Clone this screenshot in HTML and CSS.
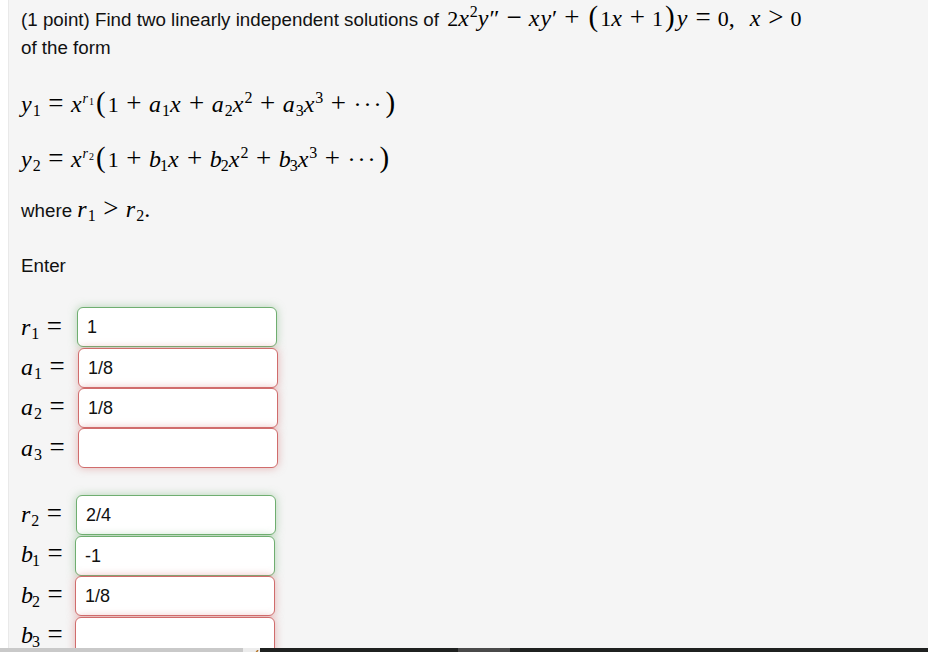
FILE: index.html
```html
<!DOCTYPE html>
<html lang="en">
<head>
  <meta charset="UTF-8">
  <title>Problem</title>
  <link rel="stylesheet" href="styles.css">
</head>
<body>

  <div class="problem">
    <p class="intro">(1 point) Find two linearly independent solutions of <span class="math eq"><span class="n">2</span><i>x</i><sup>2</sup><i>y</i>″<span class="op">−</span><i>x</i><i>y</i>′<span class="op">+</span><span class="paren">(</span><span class="n">1</span><i>x</i><span class="op">+</span><span class="n">1</span><span class="paren">)</span><i>y</i><span class="op">=</span><span class="n">0</span>,<span class="gap"></span><i>x</i><span class="op">&gt;</span><span class="n">0</span></span><br>of the form</p>

    <p class="math formula"><i>y</i><sub>1</sub><span class="op">=</span><i>x</i><sup><i>r</i><sub>1</sub></sup><span class="paren">(</span><span class="n">1</span><span class="op">+</span><i>a</i><sub>1</sub><i>x</i><span class="op">+</span><i>a</i><sub>2</sub><i>x</i><sup>2</sup><span class="op">+</span><i>a</i><sub>3</sub><i>x</i><sup>3</sup><span class="op">+</span><span class="dots">···</span><span class="paren">)</span></p>
    <p class="math formula"><i>y</i><sub>2</sub><span class="op">=</span><i>x</i><sup><i>r</i><sub>2</sub></sup><span class="paren">(</span><span class="n">1</span><span class="op">+</span><i class="b">b</i><sub>1</sub><i>x</i><span class="op">+</span><i class="b">b</i><sub>2</sub><i>x</i><sup>2</sup><span class="op">+</span><i class="b">b</i><sub>3</sub><i>x</i><sup>3</sup><span class="op">+</span><span class="dots">···</span><span class="paren">)</span></p>

    <p class="where">where <span class="math inline"><i>r</i><sub>1</sub><span class="op">&gt;</span><i>r</i><sub>2</sub>.</span></p>

    <p class="enter">Enter</p>

    <div class="answers group-a">
      <div class="row first"><label class="math"><i>r</i><sub>1</sub><span class="op">=</span></label><input class="ok" type="text" value="1"></div>
      <div class="row"><label class="math"><i>a</i><sub>1</sub><span class="op">=</span></label><input class="bad" type="text" value="1/8"></div>
      <div class="row"><label class="math"><i>a</i><sub>2</sub><span class="op">=</span></label><input class="bad" type="text" value="1/8"></div>
      <div class="row"><label class="math"><i>a</i><sub>3</sub><span class="op">=</span></label><input class="bad" type="text" value=""></div>
    </div>

    <div class="answers group-b">
      <div class="row first"><label class="math"><i>r</i><sub>2</sub><span class="op">=</span></label><input class="ok" type="text" value="2/4"></div>
      <div class="row"><label class="math"><i class="b">b</i><sub>1</sub><span class="op">=</span></label><input class="ok" type="text" value="-1"></div>
      <div class="row"><label class="math"><i class="b">b</i><sub>2</sub><span class="op">=</span></label><input class="bad" type="text" value="1/8"></div>
      <div class="row"><label class="math"><i class="b">b</i><sub>3</sub><span class="op">=</span></label><input class="bad" type="text" value=""></div>
    </div>
  </div>

  <div class="taskbar">
    <div class="tray-light"></div>
    <div class="tray-thumb"><svg width="17" height="4" viewBox="0 0 17 4"><path d="M5 4h8V2H5z" fill="#a8c84a"/><path d="M12 4l3-4" stroke="#b5762a" stroke-width="1.5"/></svg></div>
    <div class="tray-dark"></div>
    <div class="tray-mid"></div>
    <div class="tray-dark grow"></div>
  </div>

</body>
</html>
```

FILE: styles.css
```css
* {
  box-sizing: border-box;
  margin: 0;
  padding: 0;
}

html, body {
  height: 652px;
  overflow: hidden;
}

body {
  display: flex;
  flex-direction: column;
  background-color: #fff;
  font-family: "Liberation Sans", Arial, sans-serif;
  font-size: 18.75px;
  color: #111;
  padding-left: 8px;
}

.problem {
  flex: 1;
  min-height: 0;
  overflow: hidden;
  background-color: #f5f5f5;
  border-left: 1px solid #e9e9e9;
  padding: 6px 0 0 12px;
}

.intro {
  line-height: 27.5px;
  white-space: nowrap;
}

.math {
  font-family: "Liberation Serif", "Times New Roman", serif;
  font-size: 24px;
  color: #000;
}

.math i {
  letter-spacing: 1px;
}

.math i.b {
  letter-spacing: -1px;
}

.n {
  font-size: 22px;
}

.math sup, .math sub {
  font-size: 16px;
  line-height: 0;
}

.math sub {
  vertical-align: -4px;
}

.math sup {
  vertical-align: 9px;
}

.math sup i {
  font-size: 14px;
}

.math sup sub {
  font-size: 10px;
  vertical-align: -2px;
}

.op {
  font-size: 27px;
  line-height: 0;
  margin: 0 7.5px;
}

.paren {
  font-size: 29px;
  font-weight: 300;
  line-height: 0;
  margin: 0 2px;
}

.dots {
  letter-spacing: 2px;
}

.eq, .inline {
  line-height: 0;
}

.eq {
  margin-left: 3px;
}

.eq .op {
  margin: 0 7px;
}

.gap {
  display: inline-block;
  width: 15px;
}

.formula {
  margin-top: 26px;
  line-height: 35px;
  white-space: nowrap;
}

.formula + .formula {
  margin-top: 20px;
}

.where {
  margin-top: 20px;
  line-height: 27px;
}

.enter {
  margin-top: 28px;
  line-height: 27px;
}

.answers {
  display: flex;
  flex-direction: column;
}

.group-a {
  margin-top: 28px;
}

.group-b {
  margin-top: 26.6px;
}

.row {
  display: flex;
  align-items: center;
  height: 40.4px;
}

.row label {
  width: 57px;
  white-space: nowrap;
}

.row.first label {
  width: 56px;
}

.group-b .row label {
  width: 54px;
  padding-bottom: 2px;
}

.group-b .row.first label {
  width: 55px;
}

.row input {
  width: 200px;
  height: 40px;
  padding: 1px 9px 0;
  font-family: "Liberation Sans", Arial, sans-serif;
  font-size: 18px;
  color: #111;
  background-color: #fff;
  border-radius: 6px;
  outline: none;
}

.ok {
  border: 1px solid #6fae70;
  box-shadow: 0 0 8px rgba(111, 176, 113, 0.5);
}

.bad {
  border: 1px solid #d06c6c;
  box-shadow: 0 0 8px rgba(212, 111, 111, 0.5);
}

.taskbar {
  display: flex;
  flex-shrink: 0;
  height: 4px;
  margin-left: -8px;
}

.tray-light {
  width: 243px;
  background-color: #c9c9c9;
}

.tray-thumb {
  width: 17px;
  background-color: #ececec;
  line-height: 0;
}

.tray-dark {
  width: 198px;
  background-color: #1f2120;
}

.tray-mid {
  width: 52px;
  background-color: #4a4a4a;
}

.grow {
  flex: 1;
}
```
